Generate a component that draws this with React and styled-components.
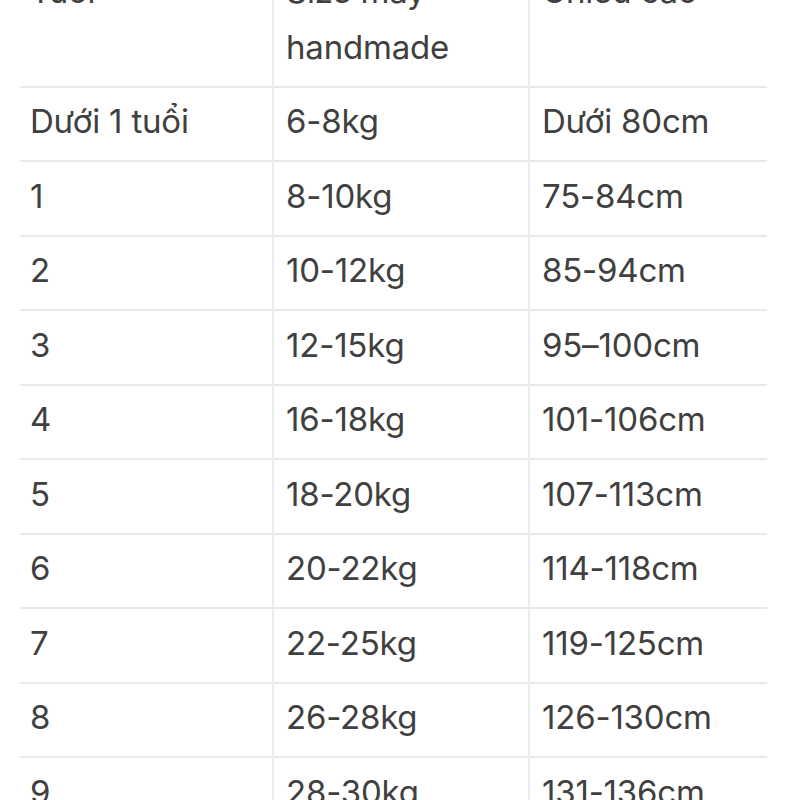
import React from 'react'
import styled, { createGlobalStyle } from 'styled-components'

const GlobalStyle = createGlobalStyle`
	html, body {
		margin: 0;
		padding: 0;
		background: #fff;
		overflow: hidden;
	}
	body {
		font-family: Inter, "Noto Sans", sans-serif;
		color: #404040;
	}
`

const Page = styled.div`
	width: 800px;
	height: 800px;
	overflow: hidden;
	background: #fff;
`

const Table = styled.div`
	margin: -43px 33px 0 20px;
	display: flex;
	flex-direction: column;
`

const Row = styled.div`
	display: grid;
	grid-template-columns: 254px 256px 1fr;
	height: ${p => p.$head ? '130.5px' : '74.5px'};
	box-sizing: border-box;
	border-bottom: 2px solid #e9e9e9;
`

const Cell = styled.div`
	box-sizing: border-box;
	padding: 5.5px 12px 0 ${p => p.$first ? '10px' : '12px'};
	font-size: 33px;
	line-height: 56px;
	font-weight: 400;
	letter-spacing: -0.2px;
	border-right: ${p => p.$last ? 'none' : '2px solid #ececec'};
	margin-bottom: -2px;
`

const head = ['Tuổi', 'Size may handmade', 'Chiều cao']

const rows = [
	['Dưới 1 tuổi', '6-8kg', 'Dưới 80cm'],
	['1', '8-10kg', '75-84cm'],
	['2', '10-12kg', '85-94cm'],
	['3', '12-15kg', '95–100cm'],
	['4', '16-18kg', '101-106cm'],
	['5', '18-20kg', '107-113cm'],
	['6', '20-22kg', '114-118cm'],
	['7', '22-25kg', '119-125cm'],
	['8', '26-28kg', '126-130cm'],
	['9', '28-30kg', '131-136cm'],
]

const SizeRow = ({ cells, head }) => (
	<Row $head={head}>
		{cells.map((c, i) => (
			<Cell key={i} $first={i === 0} $last={i === cells.length - 1}>{c}</Cell>
		))}
	</Row>
)

export default function App() {
	return (
		<Page>
			<GlobalStyle />
			<Table>
				<SizeRow cells={head} head />
				{rows.map((r, i) => <SizeRow key={i} cells={r} />)}
			</Table>
		</Page>
	)
}
